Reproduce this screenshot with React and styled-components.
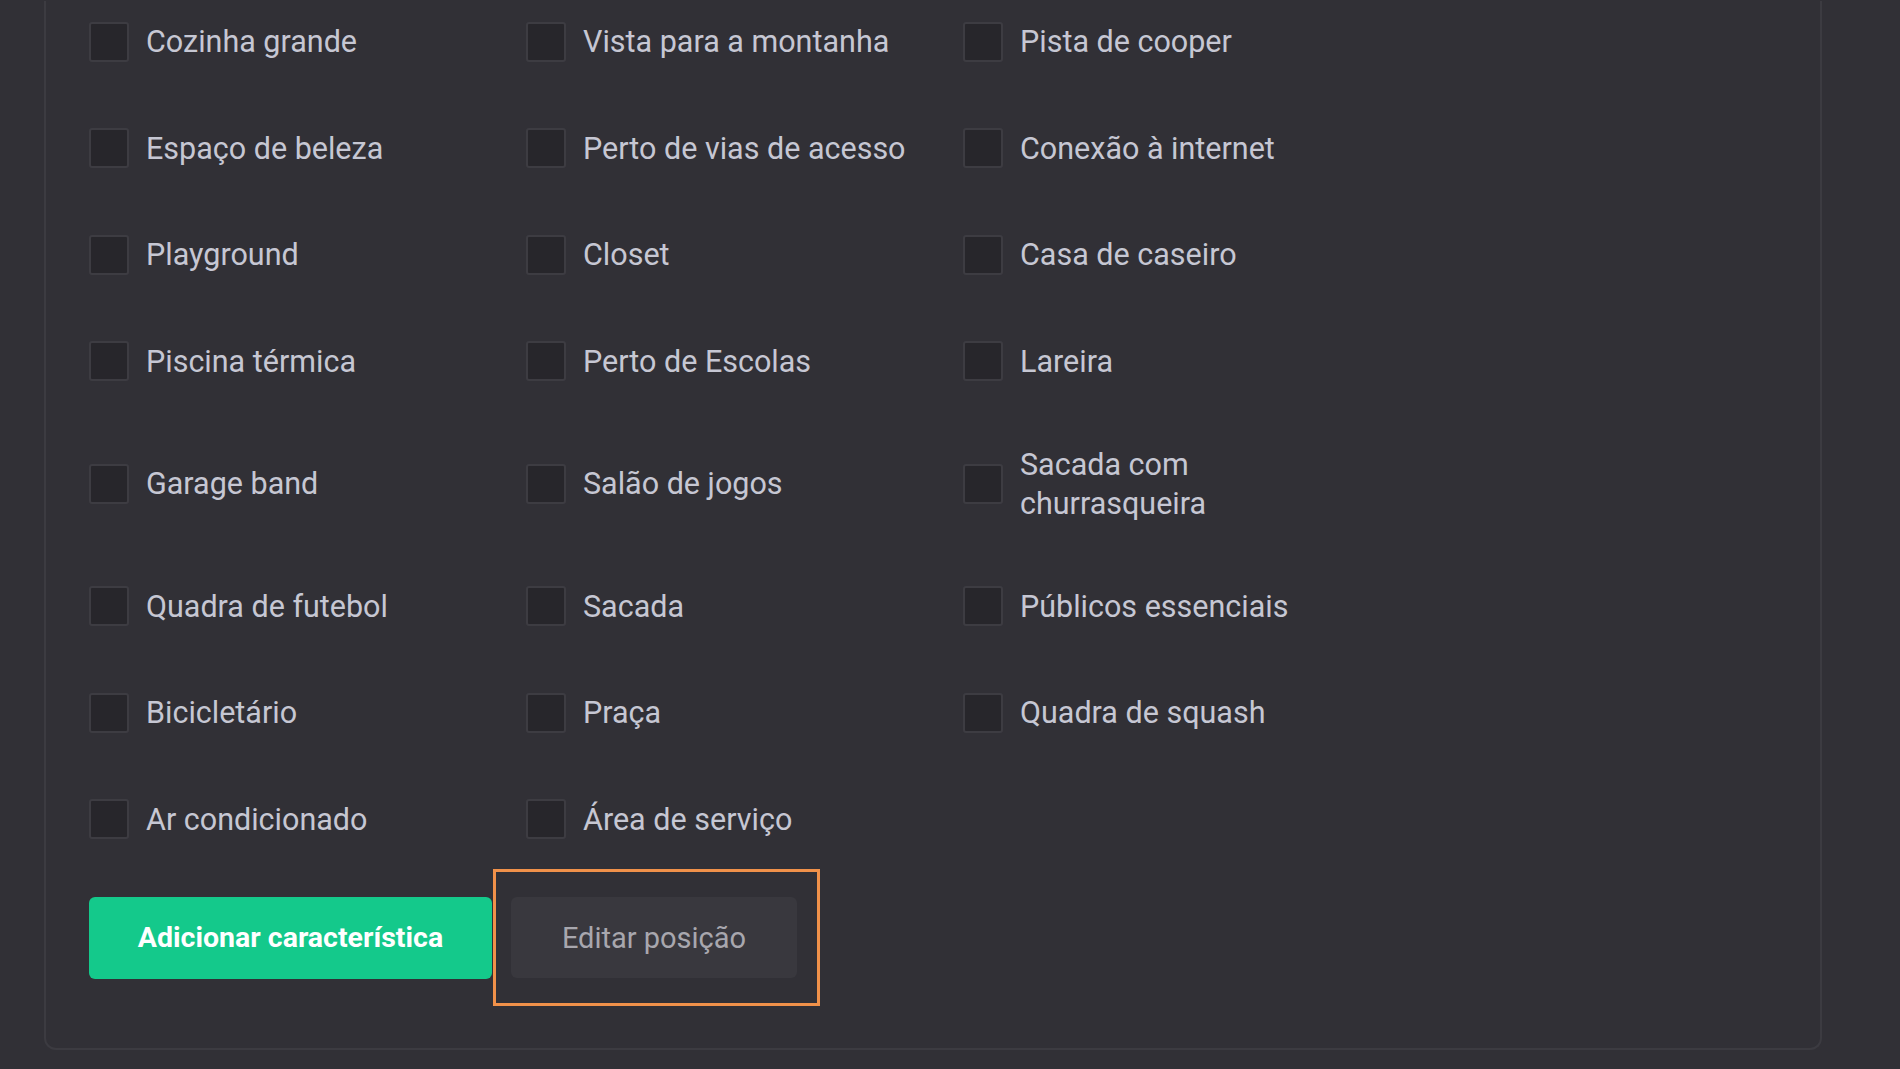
import React from "react";
import styled, { createGlobalStyle } from "styled-components";

const GlobalStyle = createGlobalStyle`
  html, body {
    margin: 0;
    padding: 0;
    background: #313036;
  }
  body {
    font-family: Roboto, "Liberation Sans", Arial, sans-serif;
    -webkit-font-smoothing: antialiased;
  }
`;

const features = [
  "Cozinha grande",
  "Vista para a montanha",
  "Pista de cooper",
  "Espaço de beleza",
  "Perto de vias de acesso",
  "Conexão à internet",
  "Playground",
  "Closet",
  "Casa de caseiro",
  "Piscina térmica",
  "Perto de Escolas",
  "Lareira",
  "Garage band",
  "Salão de jogos",
  "Sacada com churrasqueira",
  "Quadra de futebol",
  "Sacada",
  "Públicos essenciais",
  "Bicicletário",
  "Praça",
  "Quadra de squash",
  "Ar condicionado",
  "Área de serviço",
];

const App = () => {
  return (
    <Page>
      <GlobalStyle />
      <Panel>
        <FeatureGrid>
          {features.map((name) => (
            <Feature key={name}>
              <Box type="checkbox" />
              <Label>{name}</Label>
            </Feature>
          ))}
        </FeatureGrid>
        <Actions>
          <PrimaryButton>Adicionar característica</PrimaryButton>
          <Highlight>
            <SecondaryButton>Editar posição</SecondaryButton>
          </Highlight>
        </Actions>
      </Panel>
    </Page>
  );
};

export default App;

const Page = styled.div`
  width: 100%;
  height: 1069px;
  padding: 0 78px 19px 44px;
  box-sizing: border-box;
  display: flex;
  align-items: flex-end;
  overflow: hidden;
`;

const Panel = styled.div`
  flex: 1;
  box-sizing: border-box;
  background: #313036;
  border: 2px solid #3c3b41;
  border-top: none;
  border-radius: 0 0 12px 12px;
  padding: 21px 0 42px 43px;
  display: flex;
  flex-direction: column;
  gap: 30px;
`;

const FeatureGrid = styled.div`
  display: grid;
  grid-template-columns: 437px 437px 350px;
  row-gap: 66.5px;
`;

const Feature = styled.label`
  display: flex;
  align-items: center;
  gap: 17px;
  cursor: pointer;
`;

const Box = styled.input`
  appearance: none;
  -webkit-appearance: none;
  margin: 0;
  flex: none;
  width: 40px;
  height: 40px;
  box-sizing: border-box;
  background: #27262b;
  border: 2px solid #3d3c42;
  border-radius: 3px;
`;

const Label = styled.span`
  font-size: 30.5px;
  line-height: 39px;
  margin: -3px 0;
  color: #c6c7d3;
`;

const Actions = styled.div`
  display: flex;
  align-items: center;
`;

const PrimaryButton = styled.button`
  height: 82px;
  width: 403px;
  border: none;
  border-radius: 6px;
  background: #14c98b;
  color: #ffffff;
  font-family: Roboto, sans-serif;
  font-size: 28.5px;
  font-weight: 700;
  cursor: pointer;
`;

const Highlight = styled.div`
  margin-left: 1px;
  padding: 25px 20px 25px 15px;
  border: 3px solid #f0914a;
`;

const SecondaryButton = styled.button`
  height: 81px;
  width: 286px;
  border: none;
  border-radius: 6px;
  background: #39383e;
  color: #a8a7ae;
  font-family: Roboto, sans-serif;
  font-size: 29px;
  font-weight: 400;
  cursor: pointer;
`;
